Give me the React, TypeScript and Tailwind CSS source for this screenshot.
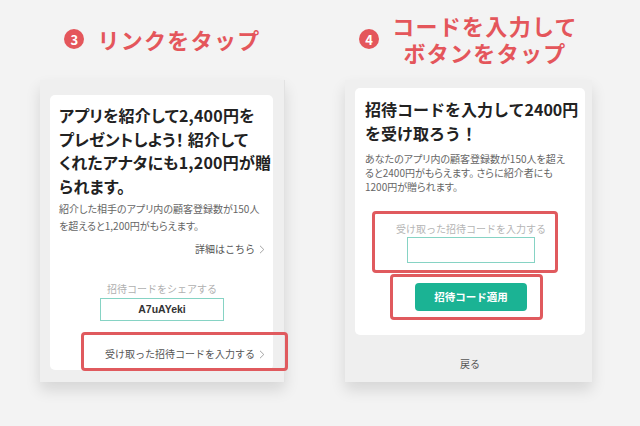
import React from "react";

const jp = "font-['Noto_Sans_CJK_JP','Noto_Sans',sans-serif]";

function Chevron() {
  return (
    <svg width="6" height="9" viewBox="0 0 6 9" className="inline-block ml-[4px] mb-[1px]">
      <path d="M1 0.8 L4.8 4.5 L1 8.2" fill="none" stroke="#9a9a9a" strokeWidth="0.9" />
    </svg>
  );
}

function Badge({ n }: { n: string }) {
  return (
    <div className="w-[20px] h-[20px] rounded-full bg-[#e4565b] text-white text-[13px] font-bold flex items-center justify-center leading-none">
      {n}
    </div>
  );
}

export default function App() {
  return (
    <div className={`w-[640px] h-[426px] bg-[#f3f3f3] flex overflow-hidden ${jp}`}>
      {/* Left column */}
      <div className="relative ml-[40px] w-[245px] flex flex-col">
        <div className="h-[80px] flex items-center justify-center gap-[13px] pb-[2px]">
          <Badge n="3" />
          <div className="text-[22px] font-bold text-[#e4565b] tracking-[1.3px]">リンクをタップ</div>
        </div>
        <div className="h-[302px] bg-[#efefef] border-r border-[#e2e2e2] shadow-[0_8px_14px_rgba(0,0,0,0.12)] pl-[10px] pr-[11px] pt-[15px] pb-[12px]">
          <div className="h-full bg-white rounded-[5px] pt-[9px] pl-[9px] pr-[8px] flex flex-col">
            <div className="text-[16px] font-bold leading-[23.5px] text-[#222] whitespace-nowrap [font-feature-settings:'palt'] tracking-[0.2px]">
              アプリを紹介して2,400円を<br />
              プレゼントしよう！ 紹介して<br />
              くれたアナタにも1,200円が贈<br />
              られます。
            </div>
            <div className="mt-[3px] text-[10px] leading-[16.5px] text-[#666] whitespace-nowrap [font-feature-settings:'palt']">
              紹介した相手のアプリ内の顧客登録数が150人<br />
              を超えると1,200円がもらえます。
            </div>
            <div className="mt-[7px] text-[10px] leading-[16px] text-[#555] text-right whitespace-nowrap">
              詳細はこちら<Chevron />
            </div>
            <div className="mt-[24px] text-[10px] leading-[16px] text-[#b0b0b0] text-center whitespace-nowrap">
              招待コードをシェアする
            </div>
            <div className="mt-[1px] mx-auto w-[124px] h-[23px] border-[1.5px] border-[#86d3c4] flex items-center justify-center text-[10.5px] font-bold text-[#333] font-['Liberation_Sans',sans-serif]">
              A7uAYeki
            </div>
            <div className="mt-[25px] text-[10px] leading-[16px] text-[#555] text-right whitespace-nowrap">
              受け取った招待コードを入力する<Chevron />
            </div>
          </div>
        </div>
        <div className="absolute left-[41px] top-[332px] w-[207px] h-[39px] border-[3px] border-[#e05a5e] rounded-[4px]" />
      </div>

      {/* Right column */}
      <div className="relative ml-[60px] w-[247px] flex flex-col">
        <div className="h-[80px] flex items-center justify-center gap-[13px] pb-[2px]">
          <Badge n="4" />
          <div className="text-[22px] font-bold text-[#e4565b] tracking-[1.3px] leading-[27px] text-center">
            <div>コードを入力して</div>
            <div>ボタンをタップ</div>
          </div>
        </div>
        <div className="h-[302px] bg-[#efefef] shadow-[0_8px_14px_rgba(0,0,0,0.12)] pl-[10px] pr-[7px] pt-[8px] flex flex-col">
          <div className="h-[247px] bg-white rounded-[5px] pt-[10px] pl-[10px] pr-[8px] flex flex-col">
            <div className="text-[16px] font-bold leading-[23.5px] text-[#222] whitespace-nowrap">
              招待コードを入力して2400円<br />
              を受け取ろう！
            </div>
            <div className="mt-[7px] text-[10px] leading-[14px] text-[#666] whitespace-nowrap [font-feature-settings:'palt']">
              あなたのアプリ内の顧客登録数が150人を超え<br />
              ると2400円がもらえます。 さらに紹介者にも<br />
              1200円が贈られます。
            </div>
            <div className="mt-[27px] text-[10px] leading-[16px] text-[#b5b5b5] text-center whitespace-nowrap">
              受け取った招待コードを入力する
            </div>
            <div className="mt-[0px] mx-auto w-[128px] h-[26px] border-[1.5px] border-[#86d3c4]" />
            <div className="mt-[20px] mx-auto w-[112px] h-[28px] rounded-[4px] bg-[#1bb394] text-white text-[10.5px] font-bold flex items-center justify-center">
              招待コード適用
            </div>
          </div>
          <div className="flex-1 flex items-center justify-center pt-[10px] text-[10px] text-[#555]">戻る</div>
        </div>
        <div className="absolute left-[27px] top-[211px] w-[186px] h-[62px] border-[3px] border-[#e05a5e] rounded-[4px]" />
        <div className="absolute left-[45px] top-[274px] w-[153px] h-[46px] border-[3px] border-[#e05a5e] rounded-[4px]" />
      </div>
    </div>
  );
}
